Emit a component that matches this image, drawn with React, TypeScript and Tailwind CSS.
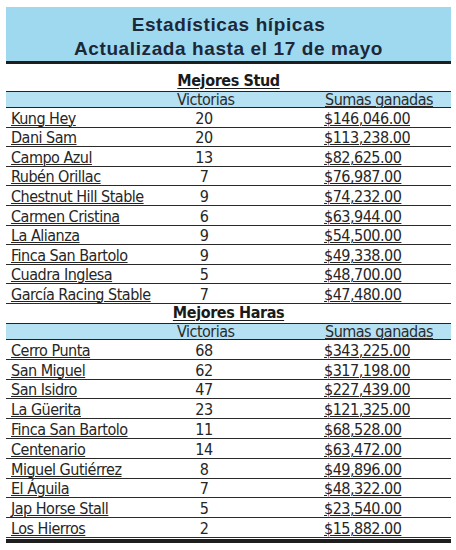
import React from "react";

interface Row {
  name: string;
  wins: number;
  amount: string;
}

const stud: Row[] = [
  { name: "Kung Hey", wins: 20, amount: "$146,046.00" },
  { name: "Dani Sam", wins: 20, amount: "$113,238.00" },
  { name: "Campo Azul", wins: 13, amount: "$82,625.00" },
  { name: "Rubén Orillac", wins: 7, amount: "$76,987.00" },
  { name: "Chestnut Hill Stable", wins: 9, amount: "$74,232.00" },
  { name: "Carmen Cristina", wins: 6, amount: "$63,944.00" },
  { name: "La Alianza", wins: 9, amount: "$54,500.00" },
  { name: "Finca San Bartolo", wins: 9, amount: "$49,338.00" },
  { name: "Cuadra Inglesa", wins: 5, amount: "$48,700.00" },
  { name: "García Racing Stable", wins: 7, amount: "$47,480.00" },
];

const haras: Row[] = [
  { name: "Cerro Punta", wins: 68, amount: "$343,225.00" },
  { name: "San Miguel", wins: 62, amount: "$317,198.00" },
  { name: "San Isidro", wins: 47, amount: "$227,439.00" },
  { name: "La Güerita", wins: 23, amount: "$121,325.00" },
  { name: "Finca San Bartolo", wins: 11, amount: "$68,528.00" },
  { name: "Centenario", wins: 14, amount: "$63,472.00" },
  { name: "Miguel Gutiérrez", wins: 8, amount: "$49,896.00" },
  { name: "El Águila", wins: 7, amount: "$48,322.00" },
  { name: "Jap Horse Stall", wins: 5, amount: "$23,540.00" },
  { name: "Los Hierros", wins: 2, amount: "$15,882.00" },
];

const narrow = {
  fontFamily: '"Liberation Sans Narrow", "DejaVu Sans Condensed", "Liberation Sans", sans-serif',
};

const Section = ({
  title,
  rows,
  titleH,
  headH,
  rowH,
}: {
  title: string;
  rows: Row[];
  titleH: string;
  headH: string;
  rowH: string;
}) => (
  <div>
    <div className={`flex items-end justify-center pb-[2px] ${titleH}`}>
      <span className="text-[16px] leading-[16px] font-bold tracking-[-0.4px] text-[#1a1a1a] underline underline-offset-2 decoration-1">
        {title}
      </span>
    </div>
    <div
      className={`grid grid-cols-[164px_154px_1fr] items-end border-y border-[#222] bg-[#b5e1f3] text-[16px] leading-[16px] tracking-[-0.5px] text-[#2b2b2b] ${headH}`}
    >
      <span />
      <span className="pl-[7px] pb-[1px]">Victorias</span>
      <span className="pl-[1px] pb-[1px] underline decoration-1">Sumas ganadas</span>
    </div>
    {rows.map((r) => (
      <div
        key={r.name}
        className={`grid grid-cols-[164px_154px_1fr] items-end border-b border-[#2a2a2a] text-[16px] leading-[17px] tracking-[-0.5px] text-[#262626] ${rowH}`}
      >
        <span className="pl-[5px] underline decoration-1 underline-offset-[1px]">{r.name}</span>
        <span className="w-[68px] text-center">{r.wins}</span>
        <span className="underline decoration-1 underline-offset-[1px]">{r.amount}</span>
      </div>
    ))}
  </div>
);

export default function App() {
  return (
    <div className="w-[456px] h-[550px] bg-white pt-[7px] px-[6px]">
      <div className="w-[445px]">
        <div
          className="h-[57px] pt-[5px] bg-[#9fd9f0] border-b-[3px] border-[#1e1e1e] flex items-center justify-center"
          style={{ fontFamily: '"Liberation Sans", Arial, sans-serif' }}
        >
          <h1 className="text-center text-[#1c2838] font-bold text-[19px] leading-[24px] tracking-[0.6px]">
            Estadísticas hípicas
            <br />
            Actualizada hasta el 17 de mayo
          </h1>
        </div>
        <div style={narrow}>
          <Section title="Mejores Stud" rows={stud} titleH="h-[27px]" headH="h-[17px]" rowH="h-[19.6px]" />
          <Section title="Mejores Haras" rows={haras} titleH="h-[19px]" headH="h-[17px]" rowH="h-[19.8px]" />
        </div>
        <div className="h-[4px] bg-[#1e1e1e] mt-[1px]" />
      </div>
    </div>
  );
}
